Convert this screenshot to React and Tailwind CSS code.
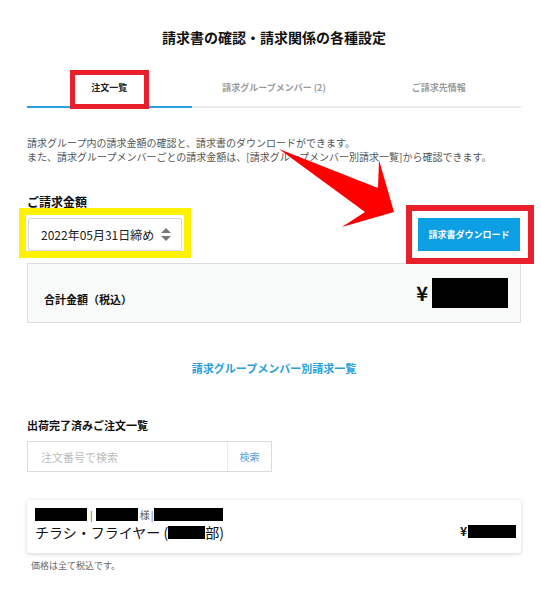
import { useState } from 'react'

const tabs = ['注文一覧', '請求グループメンバー (2)', 'ご請求先情報']

function Annotations() {
  return (
    <>
      {/* red frame on first tab */}
      <div className="absolute left-[70px] top-[70px] w-[79px] h-[39px] border-[5px] border-[#e8202a]" />
      {/* yellow frame on the closing date select */}
      <div className="absolute left-[19px] top-[208px] w-[172px] h-[50px] border-[7px] border-[#fff200]" />
      {/* red frame on download button */}
      <div className="absolute left-[406px] top-[205px] w-[128px] h-[59px] border-[6px] border-[#e8202a]" />
      {/* arrow */}
      <svg className="absolute left-0 top-0" width="541" height="601" viewBox="0 0 541 601">
        <polygon points="279,149 378,188 379,160 394,212 342,227 365,212" fill="#ff0000" />
      </svg>
    </>
  )
}

export default function App() {
  const [tab, setTab] = useState(0)
  const [query, setQuery] = useState('')

  return (
    <div
      className="relative w-[541px] h-[601px] bg-white overflow-hidden text-[#111]"
      style={{ fontFamily: '"Noto Sans CJK JP", "Noto Sans", sans-serif' }}
    >
      <div className="ml-[27px] w-[494px] flex flex-col">
        <h1 className="pt-[28px] text-center text-[14px] leading-[18px] font-bold">
          請求書の確認・請求関係の各種設定
        </h1>

        {/* Tabs */}
        <div className="mt-[24px] flex">
          {tabs.map((t, i) => (
            <button
              key={t}
              onClick={() => setTab(i)}
              className={
                'flex-1 h-[38px] flex items-center justify-center text-[9px] font-bold border-b-2 ' +
                (tab === i ? 'text-[#222] border-[#2ba1e0]' : 'text-[#9a9a9a] border-[#ececec]')
              }
            >
              {t}
            </button>
          ))}
        </div>

        <p className="mt-[28px] text-[10px] leading-[14px] text-[#555]">
          請求グループ内の請求金額の確認と、請求書のダウンロードができます。
          <br />
          また、請求グループメンバーごとの請求金額は、[請求グループメンバー別請求一覧]から確認できます。
        </p>

        <h2 className="mt-[30px] text-[12px] leading-[16px] font-bold">ご請求金額</h2>

        <div className="mt-[8px] flex items-center justify-between">
          <div className="ml-[1px] w-[154px] h-[33px] border border-[#d6d6d6] rounded-[2px] flex items-center justify-between pl-[12px] pr-[10px]">
            <span className="text-[12px] text-[#222]">2022年05月31日締め</span>
            <span className="flex flex-col items-center gap-[3px]">
              <span className="w-0 h-0 border-l-[5px] border-r-[5px] border-b-[5px] border-l-transparent border-r-transparent border-b-[#777]" />
              <span className="w-0 h-0 border-l-[5px] border-r-[5px] border-t-[5px] border-l-transparent border-r-transparent border-t-[#777]" />
            </span>
          </div>
          <button className="mr-[1px] w-[102px] h-[33px] bg-[#0c9fe3] text-white text-[9px] font-bold">
            請求書ダウンロード
          </button>
        </div>

        <div className="mt-[12px] h-[60px] bg-[#f8f9f9] border border-[#dedede] flex items-center justify-between pl-[16px] pr-[12px]">
          <span className="mt-[12px] text-[11px] font-bold">合計金額（税込）</span>
          <span className="flex items-center gap-[4px]">
            <span className="text-[20px] font-bold leading-none">¥</span>
            <span className="w-[76px] h-[30px] bg-black" />
          </span>
        </div>

        <a className="mt-[37px] text-center text-[11px] leading-[16px] font-bold text-[#2b9fdb]">
          請求グループメンバー別請求一覧
        </a>

        <h2 className="mt-[41px] text-[11px] leading-[16px] font-bold">出荷完了済みご注文一覧</h2>

        <div className="mt-[8px] w-[245px] h-[31px] border border-[#dcdcdc] flex">
          <input
            value={query}
            onChange={e => setQuery(e.target.value)}
            placeholder="注文番号で検索"
            className="w-[200px] h-full pl-[13px] text-[11px] outline-none placeholder:text-[#bdbdbd] border-r border-[#ececec]"
          />
          <button className="flex-1 text-[10px] text-[#5b9bd5]">検索</button>
        </div>

        <div className="mt-[28px] h-[53px] bg-white rounded-[3px] shadow-[0_1px_4px_rgba(0,0,0,0.18)] pl-[8px] pr-[5px] pt-[7px] flex justify-between">
          <div className="flex flex-col">
            <div className="flex items-center h-[14px] text-[10px] text-[#555]">
              <span className="w-[52px] h-[13px] bg-black" />
              <span className="mx-[3px]">|</span>
              <span className="w-[42px] h-[13px] bg-black" />
              <span className="ml-[2px]">様</span>
              <span className="mx-[1px]">|</span>
              <span className="w-[69px] h-[13px] bg-black" />
            </div>
            <div className="mt-[2px] flex items-center text-[14px] leading-[18px]">
              <span>チラシ・フライヤー (</span>
              <span className="w-[37px] h-[13px] bg-black" />
              <span>部)</span>
            </div>
          </div>
          <div className="mt-[17px] flex items-center h-[14px] text-[12px] font-bold">
            <span>¥</span>
            <span className="ml-[1px] w-[48px] h-[13px] bg-black" />
          </div>
        </div>

        <p className="mt-[6px] ml-[4px] text-[9px] text-[#666]">価格は全て税込です。</p>
      </div>

      <Annotations />
    </div>
  )
}
